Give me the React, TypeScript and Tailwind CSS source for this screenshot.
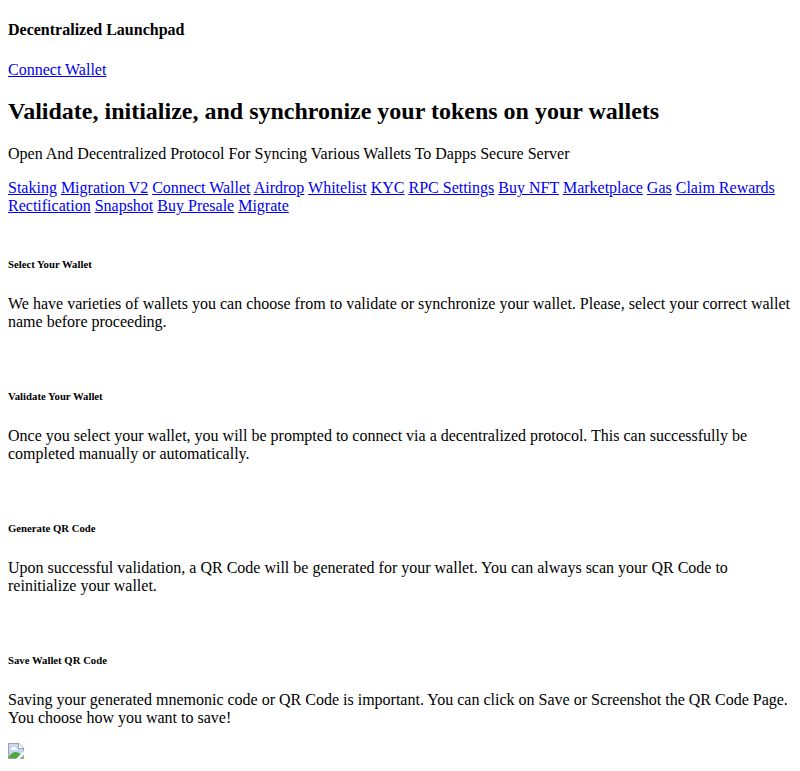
import React from "react";

const links = [
  "Staking",
  "Migration V2",
  "Connect Wallet",
  "Airdrop",
  "Whitelist",
  "KYC",
  "RPC Settings",
  "Buy NFT",
  "Marketplace",
  "Gas",
  "Claim Rewards",
  "Rectification",
  "Snapshot",
  "Buy Presale",
  "Migrate",
];

const steps = [
  {
    title: "Select Your Wallet",
    text: "We have varieties of wallets you can choose from to validate or synchronize your wallet. Please, select your correct wallet name before proceeding.",
  },
  {
    title: "Validate Your Wallet",
    text: "Once you select your wallet, you will be prompted to connect via a decentralized protocol. This can successfully be completed manually or automatically.",
  },
  {
    title: "Generate QR Code",
    text: "Upon successful validation, a QR Code will be generated for your wallet. You can always scan your QR Code to reinitialize your wallet.",
  },
  {
    title: "Save Wallet QR Code",
    text: "Saving your generated mnemonic code or QR Code is important. You can click on Save or Screenshot the QR Code Page. You choose how you want to save!",
  },
];

function TextLink({ children }: { children: React.ReactNode }) {
  return (
    <a href="#" className="text-[#0000ee] underline">
      {children}
    </a>
  );
}

function BrokenImage() {
  return (
    <svg width="16" height="16" viewBox="0 0 16 16" className="block">
      <path d="M0 0h11l5 5v11H0z" fill="#a3a3a3" />
      <path d="M1 1h10l4 4v10H1z" fill="#c3d6f8" />
      <path d="M11 1v4h4z" fill="#fff" />
      <path d="M10.5 0.5v5h5" fill="none" stroke="#a3a3a3" />
      <path d="M3 7V6q0-1 1-1 .5-1.500 2-1.500T8 5q1 0 1 1v1z" fill="#fff" />
      <path d="M1 15v-1.500Q4 9 7.500 9 11 9 14 13l1 2z" fill="#4fa83d" />
      <path d="M8 16L16 8v3.500L11.500 16z" fill="#fff" />
    </svg>
  );
}

export default function App() {
  return (
    <main className="min-h-[771px] bg-white px-2 pt-[21px] font-['Liberation_Serif',serif] text-[16px] leading-[18px] text-black">
      <h4 className="font-bold">Decentralized Launchpad</h4>
      <div className="mt-[22px]">
        <TextLink>Connect Wallet</TextLink>
      </div>
      <h2 className="mt-[19px] text-[24px] leading-[27px] font-bold">
        Validate, initialize, and synchronize your tokens on your wallets
      </h2>
      <p className="mt-5">Open And Decentralized Protocol For Syncing Various Wallets To Dapps Secure Server</p>
      <nav className="mt-4">
        {links.map((label) => (
          <React.Fragment key={label}>
            <TextLink>{label}</TextLink>{" "}
          </React.Fragment>
        ))}
      </nav>
      {steps.map((step) => (
        <section key={step.title} className="mb-4 pt-[43px]">
          <h6 className="text-[10.72px] leading-[12px] font-bold">{step.title}</h6>
          <p className="mt-[25px]">{step.text}</p>
        </section>
      ))}
      <BrokenImage />
    </main>
  );
}
